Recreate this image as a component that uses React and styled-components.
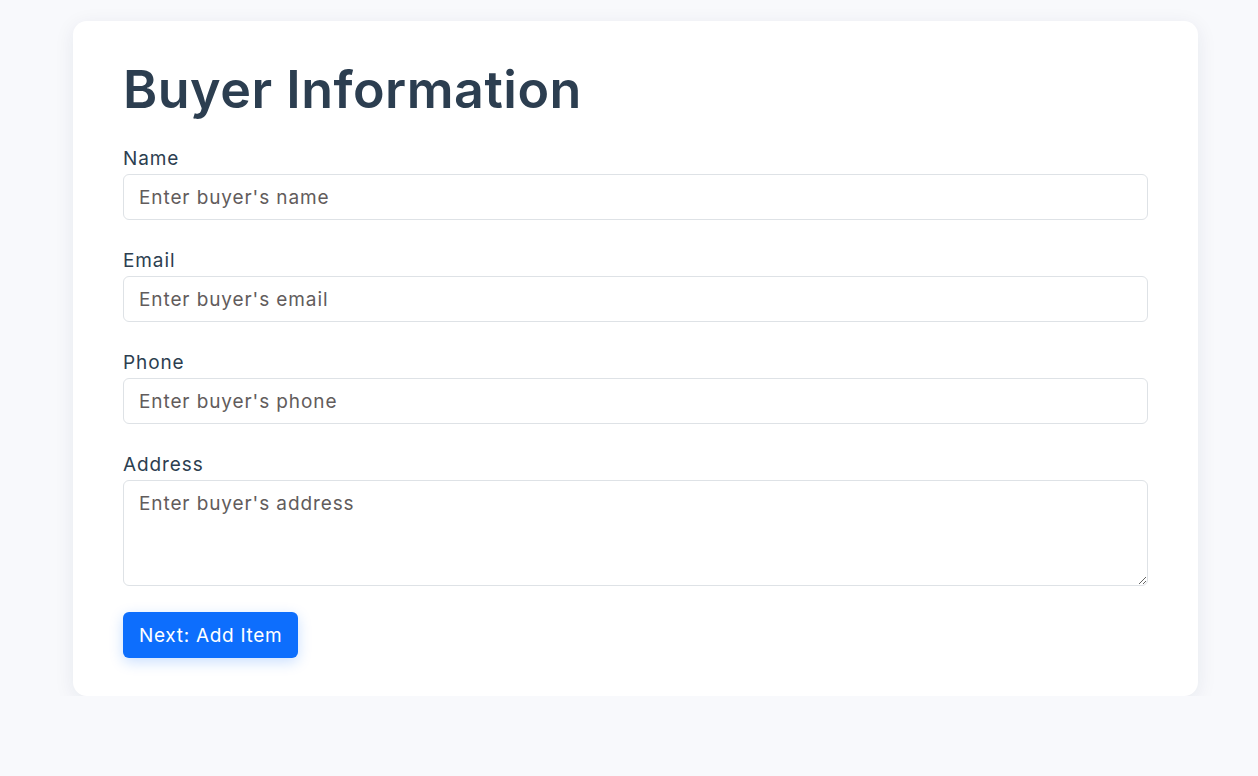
import React from 'react';
import styled, { createGlobalStyle } from 'styled-components';

const GlobalStyle = createGlobalStyle`
  body {
    margin: 0;
    background: #f8f9fc;
    font-family: Inter, "Noto Sans", sans-serif;
  }
`;

const Card = styled.div`
  margin: 21px 60px 0 73px;
  background: #fff;
  border-radius: 14px;
  box-shadow: 0 4px 20px rgba(30, 40, 80, 0.08);
  padding: 38px 50px 38px;
`;

const Title = styled.h1`
  margin: 0 0 24px;
  font-size: 52px;
  font-weight: 600;
  line-height: 1.2;
  letter-spacing: 0.5px;
  color: #2c3e50;
`;

const Group = styled.div`
  display: flex;
  flex-direction: column;
  margin-bottom: ${(p) => (p.$last ? '26px' : '27px')};
`;

const Label = styled.label`
  font-size: 19px;
  line-height: 27px;
  letter-spacing: 0.9px;
  color: #2c3e50;
  margin-bottom: 2px;
`;

const fieldCss = `
  box-sizing: border-box;
  width: 100%;
  border: 1px solid #dee2e6;
  border-radius: 6px;
  padding: 9px 15px;
  font-family: inherit;
  font-size: 19px;
  letter-spacing: 0.9px;
  line-height: 27px;
  color: #333;
  background: #fff;
  &::placeholder {
    color: #625c5c;
  }
`;

const Input = styled.input`
  ${fieldCss}
  height: 46px;
`;

const TextArea = styled.textarea`
  ${fieldCss}
  height: 106px;
  display: block;
  resize: vertical;
`;

const Button = styled.button`
  align-self: flex-start;
  background: #0d6efd;
  color: #fff;
  border: none;
  border-radius: 6px;
  height: 46px;
  padding: 0 16px;
  font-family: inherit;
  font-size: 19px;
  letter-spacing: 0.7px;
  box-shadow: 0 4px 14px rgba(13, 110, 253, 0.22);
  cursor: pointer;
`;

const fields = [
  { label: 'Name', placeholder: "Enter buyer's name" },
  { label: 'Email', placeholder: "Enter buyer's email" },
  { label: 'Phone', placeholder: "Enter buyer's phone" },
];

export default function App() {
  return (
    <>
      <GlobalStyle />
      <Card>
        <Title>Buyer Information</Title>
        {fields.map((f) => (
          <Group key={f.label}>
            <Label>{f.label}</Label>
            <Input placeholder={f.placeholder} />
          </Group>
        ))}
        <Group $last>
          <Label>Address</Label>
          <TextArea placeholder="Enter buyer's address" />
        </Group>
        <Button>Next: Add Item</Button>
      </Card>
    </>
  );
}
